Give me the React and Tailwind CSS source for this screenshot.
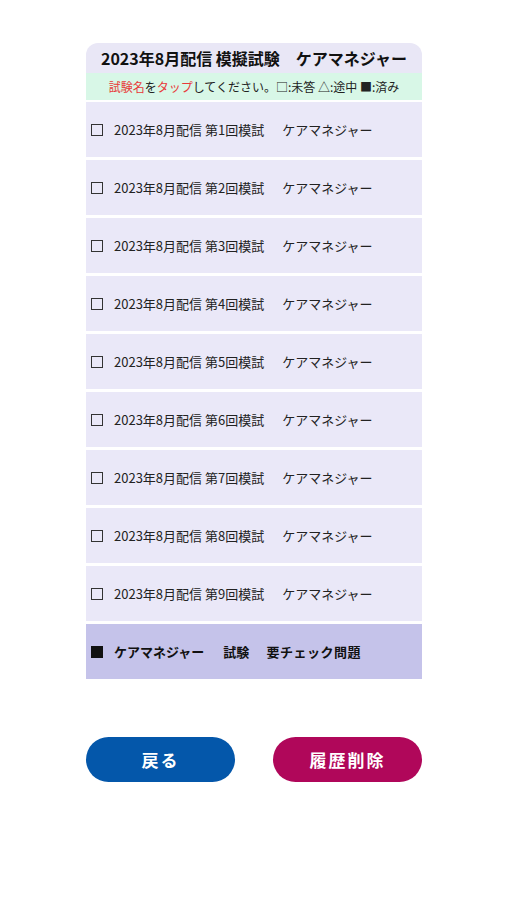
import React from 'react';

const exams = [1, 2, 3, 4, 5, 6, 7, 8, 9];

const font = { fontFamily: '"Noto Sans CJK JP", "Noto Sans", sans-serif' };

const App = () => {
    return (
        <div className="min-h-[900px] w-[507px] bg-white" style={font}>
            <div className="w-[336px] ml-[86px] pt-[43px]">
                <div className="bg-[#e9e7f6] rounded-t-[12px] h-[30px] flex items-center justify-center">
                    <h1 className="text-[16px] font-bold text-[#111] whitespace-nowrap">2023年8月配信 模擬試験　ケアマネジャー</h1>
                </div>
                <div className="bg-[#d8f7e7] h-[27px] flex items-center justify-center text-[12px] text-[#222] whitespace-nowrap">
                    <span className="text-[#e83a3a]">試験名</span>を<span className="text-[#e83a3a]">タップ</span>してください。□:未答 △:途中 ■:済み
                </div>
                <div className="flex flex-col gap-[3px] pt-[2px]">
                    {exams.map((n) => (
                        <div key={n} className="bg-[#eae8f8] h-[55px] flex items-center pl-[4px] text-[13px] text-[#222] whitespace-nowrap">
                            <span className="w-[12px] h-[12px] border-[1.5px] border-[#333] mr-[11px] ml-[1px]" />
                            <span>2023年8月配信 第{n}回模試</span>
                            <span className="ml-[18px]">ケアマネジャー</span>
                        </div>
                    ))}
                    <div className="bg-[#c5c3ea] h-[55px] flex items-center pl-[4px] text-[13px] font-bold text-[#111] whitespace-nowrap">
                        <span className="w-[12px] h-[12px] bg-[#111] mr-[11px] ml-[1px]" />
                        <span>ケアマネジャー</span>
                        <span className="ml-[19px]">試験</span>
                        <span className="ml-[17px] tracking-[0.5px]">要チェック問題</span>
                    </div>
                </div>
                <div className="flex justify-between mt-[58px]">
                    <button className="w-[149px] h-[45px] rounded-full bg-[#0457aa] text-white text-[17px] font-bold tracking-[2px]">戻る</button>
                    <button className="w-[149px] h-[45px] rounded-full bg-[#b0075a] text-white text-[17px] font-bold tracking-[2px]">履歴削除</button>
                </div>
            </div>
        </div>
    );
};

export default App;
